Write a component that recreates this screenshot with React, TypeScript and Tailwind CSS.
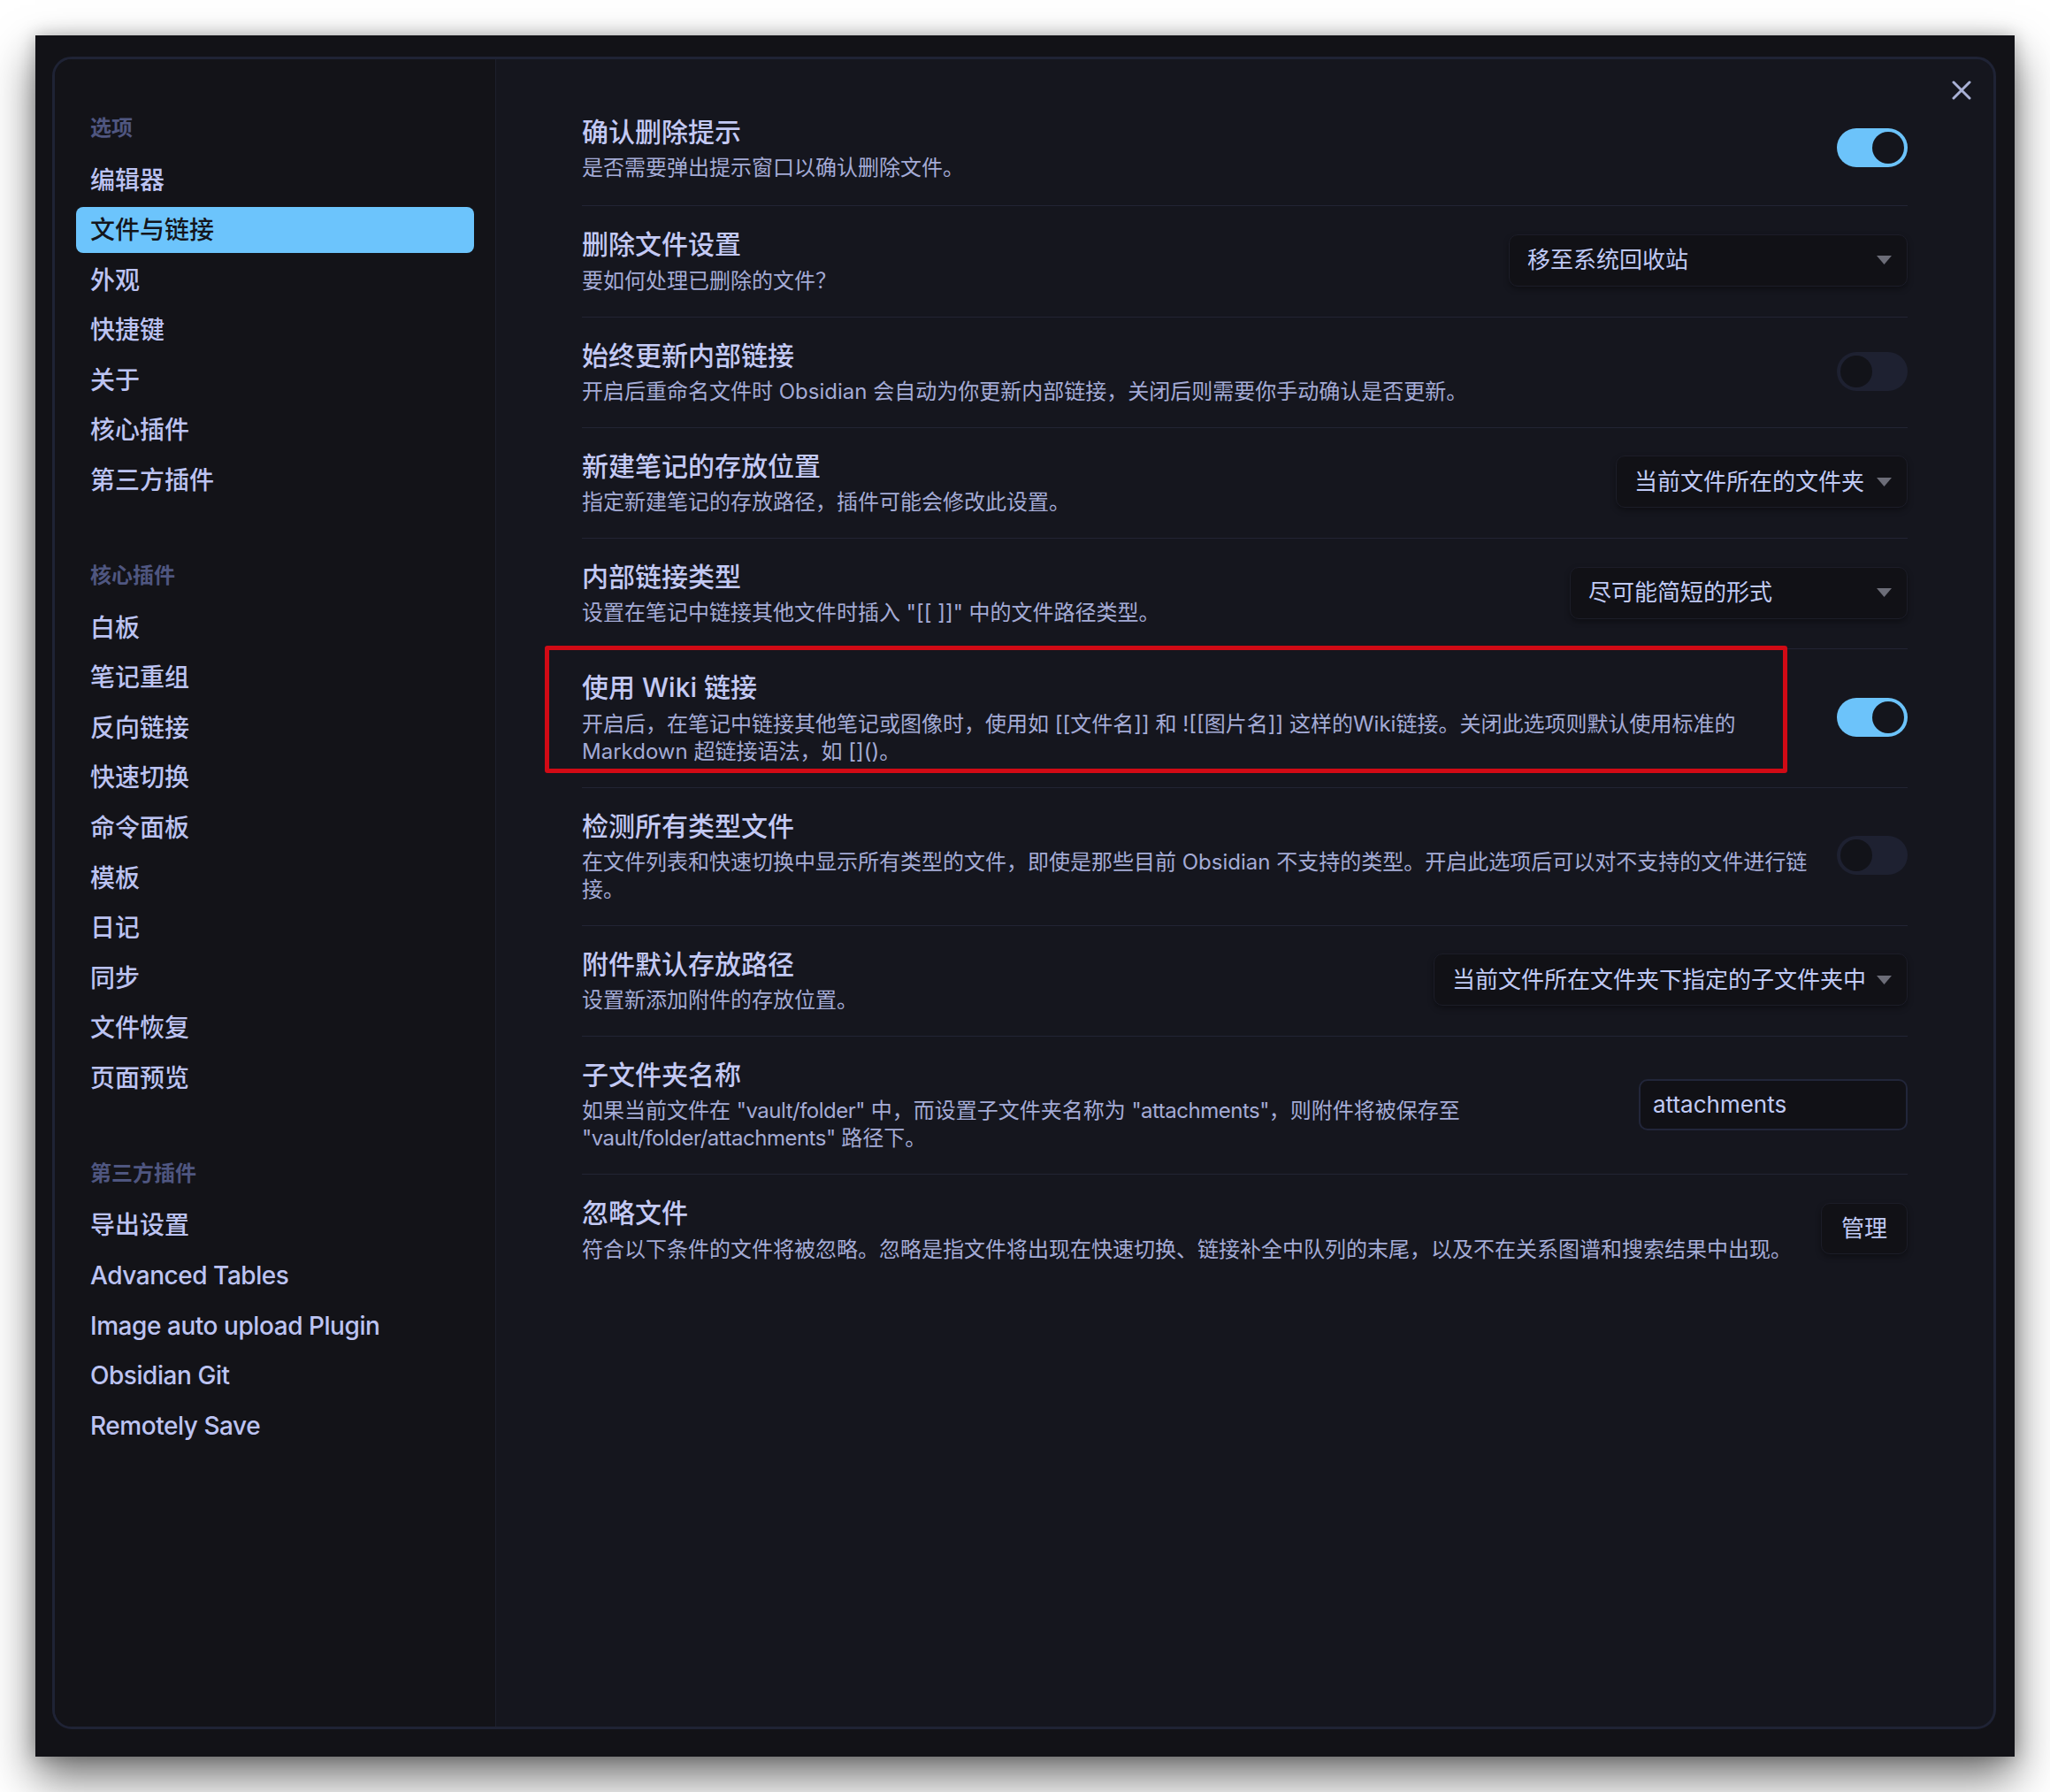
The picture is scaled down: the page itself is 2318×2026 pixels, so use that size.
import React from "react";

const FONT = "font-['Inter','Noto_Sans_CJK_SC',sans-serif]";

function Toggle({ on }: { on: boolean }) {
  return on ? (
    <div className="flex h-[44px] w-[80px] shrink-0 items-center justify-end rounded-full bg-[#6cc3fa] p-[4px]">
      <div className="h-[36px] w-[36px] rounded-full bg-[#14151c]" />
    </div>
  ) : (
    <div className="flex h-[44px] w-[80px] shrink-0 items-center justify-start rounded-full bg-[#1e2131] p-[4px]">
      <div className="h-[36px] w-[36px] rounded-full bg-[#121319]" />
    </div>
  );
}

function Select({ label, width }: { label: string; width: string }) {
  return (
    <div
      className={`flex h-[59px] shrink-0 items-center justify-between rounded-[10px] border border-[#1c1d28] bg-[#111116] pl-[20px] pr-[17px] shadow-[0_3px_6px_rgba(0,0,0,0.35)] ${width}`}
    >
      <span className="text-[26px] leading-[34px] text-[#c0caf5] whitespace-nowrap">{label}</span>
      <svg width="17" height="10" viewBox="0 0 17 10" className="shrink-0">
        <path d="M0 0 L17 0 L8.5 10 Z" fill="#6c6d78" />
      </svg>
    </div>
  );
}

type Row = {
  title: string;
  desc: React.ReactNode;
  control: React.ReactNode;
  highlight?: boolean;
};

const rows: Row[] = [
  {
    title: "确认删除提示",
    desc: "是否需要弹出提示窗口以确认删除文件。",
    control: <Toggle on />,
  },
  {
    title: "删除文件设置",
    desc: "要如何处理已删除的文件？",
    control: <Select label="移至系统回收站" width="w-[451px]" />,
  },
  {
    title: "始终更新内部链接",
    desc: "开启后重命名文件时 Obsidian 会自动为你更新内部链接，关闭后则需要你手动确认是否更新。",
    control: <Toggle on={false} />,
  },
  {
    title: "新建笔记的存放位置",
    desc: "指定新建笔记的存放路径，插件可能会修改此设置。",
    control: <Select label="当前文件所在的文件夹" width="w-[330px]" />,
  },
  {
    title: "内部链接类型",
    desc: '设置在笔记中链接其他文件时插入 "[[ ]]" 中的文件路径类型。',
    control: <Select label="尽可能简短的形式" width="w-[382px]" />,
  },
  {
    title: "使用 Wiki 链接",
    desc: "开启后，在笔记中链接其他笔记或图像时，使用如 [[文件名]] 和 ![[图片名]] 这样的Wiki链接。关闭此选项则默认使用标准的 Markdown 超链接语法，如 []()。",
    control: <Toggle on />,
    highlight: true,
  },
  {
    title: "检测所有类型文件",
    desc: "在文件列表和快速切换中显示所有类型的文件，即使是那些目前 Obsidian 不支持的类型。开启此选项后可以对不支持的文件进行链接。",
    control: <Toggle on={false} />,
  },
  {
    title: "附件默认存放路径",
    desc: "设置新添加附件的存放位置。",
    control: <Select label="当前文件所在文件夹下指定的子文件夹中" width="w-[536px]" />,
  },
  {
    title: "子文件夹名称",
    desc: (
      <>
        如果当前文件在 <span className="tracking-[-0.5px]">"vault/folder"</span> 中，而设置子文件夹名称为{" "}
        <span className="tracking-[-0.5px]">"attachments"</span>，则附件将被保存至{" "}
        <span className="tracking-[-0.5px]">"vault/folder/attachments"</span> 路径下。
      </>
    ),
    control: (
      <div className="flex h-[58px] w-[304px] shrink-0 items-center rounded-[10px] border-2 border-[#22263a] bg-[#111116] px-[14px]">
        <span className="text-[26px] leading-[34px] text-[#c0caf5]">attachments</span>
      </div>
    ),
  },
  {
    title: "忽略文件",
    desc: "符合以下条件的文件将被忽略。忽略是指文件将出现在快速切换、链接补全中队列的末尾，以及不在关系图谱和搜索结果中出现。",
    control: (
      <div className="flex h-[58px] w-[98px] shrink-0 items-center justify-center rounded-[10px] border border-[#1c1d28] bg-[#111116] shadow-[0_3px_6px_rgba(0,0,0,0.35)]">
        <span className="text-[26px] leading-[34px] text-[#c0caf5]">管理</span>
      </div>
    ),
  },
];

const groups: { heading: string; items: string[] }[] = [
  {
    heading: "选项",
    items: ["编辑器", "文件与链接", "外观", "快捷键", "关于", "核心插件", "第三方插件"],
  },
  {
    heading: "核心插件",
    items: ["白板", "笔记重组", "反向链接", "快速切换", "命令面板", "模板", "日记", "同步", "文件恢复", "页面预览"],
  },
  {
    heading: "第三方插件",
    items: ["导出设置", "Advanced Tables", "Image auto upload Plugin", "Obsidian Git", "Remotely Save"],
  },
];

const isLatin = (s: string) => /^[A-Za-z ]+$/.test(s);

export default function App() {
  return (
    <div className={`h-[2026px] w-[2318px] bg-white p-[40px] ${FONT}`}>
      <div className="flex h-full w-full flex-col bg-[#121217] pb-[31px] pl-[19px] pr-[21px] pt-[24px] shadow-[0_24px_48px_rgba(0,0,0,0.55),0_0_18px_rgba(0,0,0,0.25)]">
        <div className="relative flex flex-1 overflow-hidden rounded-[22px] border-[3px] border-[#1f2335] bg-[#15161e]">
          {/* Sidebar */}
          <div className="flex w-[499px] shrink-0 flex-col border-r border-[#1d1f2c] bg-[#131318] px-[24px] pt-[62px]">
            {groups.map((g, gi) => (
              <div key={g.heading} className={gi === 0 ? "" : "mt-[66px]"}>
                <div className="mb-[17.5px] px-[16px] text-[24px] font-bold leading-[31px] text-[#4f5680]">
                  {g.heading}
                </div>
                <div className="flex flex-col gap-[4.6px]">
                  {g.items.map((it) =>
                    it === "文件与链接" ? (
                      <div
                        key={it}
                        className="flex h-[52px] items-center rounded-[8px] bg-[#6cc4fc] px-[16px] text-[28px] font-medium text-[#14151b]"
                      >
                        {it}
                      </div>
                    ) : (
                      <div
                        key={it}
                        className={`flex h-[52px] items-center px-[16px] text-[28px] font-medium text-[#bcc3f2] ${
                          isLatin(it) ? "tracking-[-0.45px]" : ""
                        }`}
                      >
                        {it}
                      </div>
                    )
                  )}
                </div>
              </div>
            ))}
          </div>

          {/* Content */}
          <div className="flex flex-1 flex-col px-[97px] pt-[39px]">
            {rows.map((r, i) => (
              <div
                key={r.title}
                className={`relative flex items-center pb-[25px] pt-[23px] ${
                  i === 0 ? "pb-[27px]" : "border-t border-[#222434]"
                }`}
              >
                <div className="mr-[32px] min-w-0 flex-1">
                  <div className="text-[30px] font-medium leading-[40px] text-[#c3c9f4]">{r.title}</div>
                  <div className="mt-[5.25px] text-[24px] leading-[31px] text-[#a4abd6]">{r.desc}</div>
                </div>
                {r.control}
                {r.highlight && (
                  <div className="pointer-events-none absolute left-[-42px] top-[-4px] h-[144px] w-[1405px] rounded-[3px] border-[5px] border-[#d10a15]" />
                )}
              </div>
            ))}
          </div>

          {/* Close */}
          <div className="absolute right-[25px] top-[24px]">
            <svg width="22" height="22" viewBox="0 0 22 22">
              <path d="M2 2 L20 20 M20 2 L2 20" stroke="#a9b1d6" strokeWidth="3" strokeLinecap="round" />
            </svg>
          </div>
        </div>
      </div>
    </div>
  );
}
